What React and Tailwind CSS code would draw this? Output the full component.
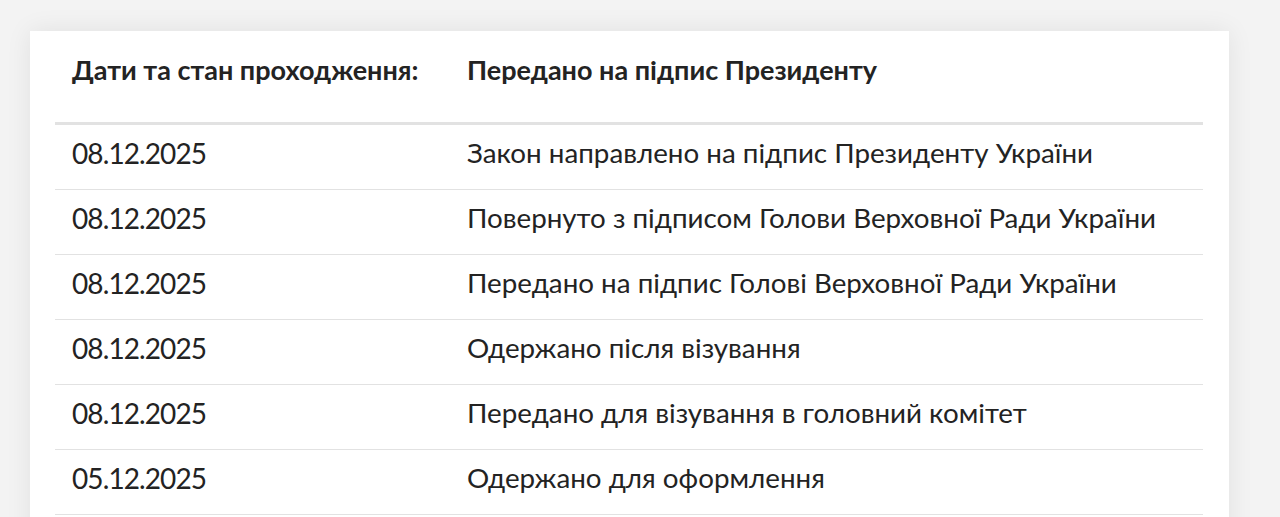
import React from 'react';

const rows = [
  { date: '08.12.2025', text: 'Закон направлено на підпис Президенту України' },
  { date: '08.12.2025', text: 'Повернуто з підписом Голови Верховної Ради України' },
  { date: '08.12.2025', text: 'Передано на підпис Голові Верховної Ради України' },
  { date: '08.12.2025', text: 'Одержано після візування' },
  { date: '08.12.2025', text: 'Передано для візування в головний комітет' },
  { date: '05.12.2025', text: 'Одержано для оформлення' },
];

export default function App() {
  return (
    <div className="h-[517px] bg-[#f3f3f3] pt-[31px] pl-[30px] pr-[51px] overflow-hidden" style={{ fontFamily: 'Lato, "Open Sans", sans-serif' }}>
      <div className="bg-white shadow-[0_0_24px_rgba(0,0,0,0.08)] pl-[25px] pr-[26px] pb-8 text-[#232323]">
        {/* Header */}
        <div className="flex items-center h-[94px] pb-[12px] border-b-[3px] border-[#e2e2e2]">
          <div className="w-[412px] pl-[17px] text-[27px] font-bold">Дати та стан проходження:</div>
          <div className="text-[27px] font-bold">Передано на підпис Президенту</div>
        </div>

        {/* Rows */}
        {rows.map((row, i) => (
          <div key={i} className="flex items-center h-[65px] pb-2 border-b border-[#e2e2e2]">
            <div className="w-[412px] pl-[17px] text-[28px] tracking-[-0.9px]">{row.date}</div>
            <div className="text-[27.75px]">{row.text}</div>
          </div>
        ))}
      </div>
    </div>
  );
}
